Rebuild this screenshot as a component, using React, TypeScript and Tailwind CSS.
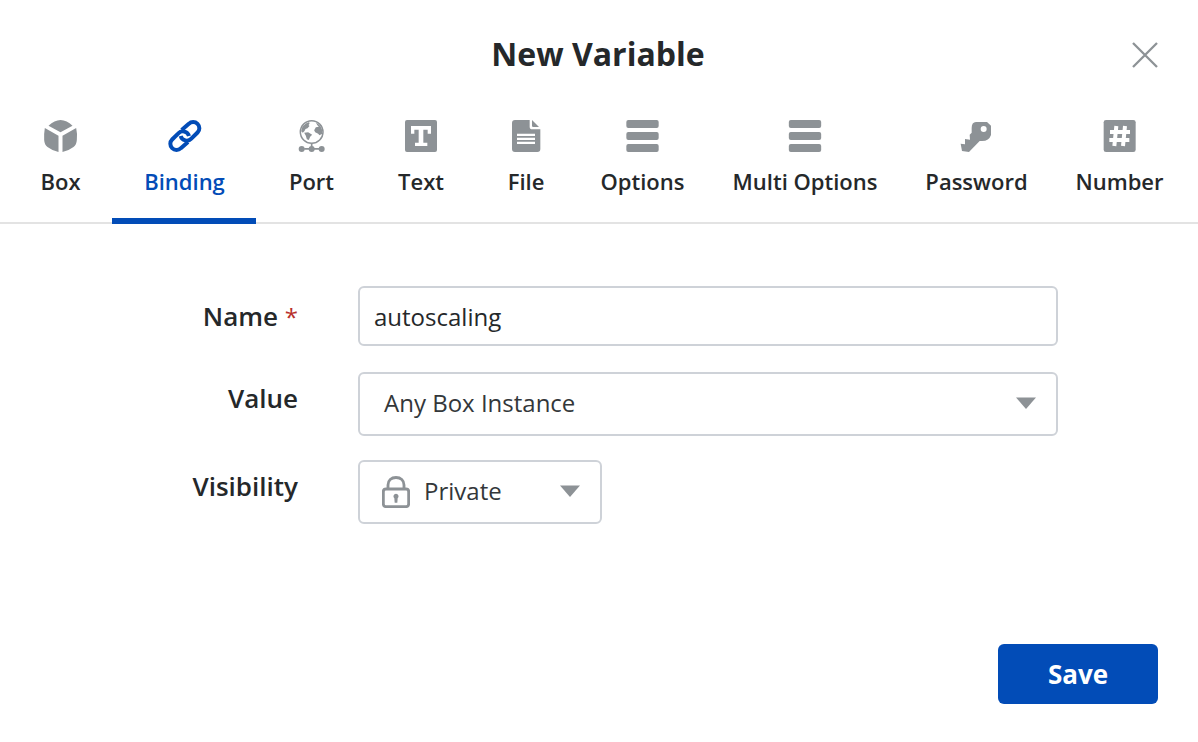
import { useState, type ReactNode } from 'react';

function Glyph({ shift, children }: { shift: number; children: ReactNode }) {
  return (
    <svg className="h-8 w-9 overflow-visible" viewBox="0 0 108 96" fill="currentColor">
      <g transform={`translate(${-shift} -60)`}>{children}</g>
    </svg>
  );
}

const BoxIcon = () => (
  <Glyph shift={128.5}>
    <path d="M145 77Q163 61 181 60Q200 61 217 77L181 97ZM134 84L175 107V156Q158 153 142 141Q133 135 132 120Q131 101 134 84ZM228 84L187 107V156Q204 153 220 141Q229 135 230 120Q232 101 228 84Z" />
  </Glyph>
);

const LinkIcon = () => (
  <Glyph shift={500}>
    <g fill="none" stroke="currentColor" strokeWidth="12">
      <path d="M544 90L565.400 71.400A18.500 18.500 0 0 1 591.600 97.600L573 116A19 19 0 0 1 541 108" />
      <path d="M563 126L541.600 144.600A18.500 18.500 0 0 1 515.400 118.400L534 100A19 19 0 0 1 566 108" />
    </g>
  </Glyph>
);

const PortIcon = () => (
  <Glyph shift={161.5}>
    <circle cx="214.500" cy="96" r="34" fill="none" stroke="currentColor" strokeWidth="4.500" />
    <path d="M183 94Q184 74 207 66L208 71L205 75L208 78L202 85L196 87L193 93L188 98ZM192 98L204 97L216 104L210 110L206 120L200 118L197 107ZM227 67Q243 76 246 91L246 101L238 106L234 101L225 97L222 91L227 82L236 80L231 75Z" />
    <path d="M212 130H217V144H237V149H192V144H212Z" />
    <circle cx="184.500" cy="147" r="9" />
    <circle cx="214.500" cy="147" r="9" />
    <circle cx="244.500" cy="147" r="9" />
  </Glyph>
);

const TextIcon = () => (
  <Glyph shift={489}>
    <path fillRule="evenodd" d="M501 60H585Q591 60 591 66V150Q591 156 585 156H501Q495 156 495 150V66Q495 60 501 60ZM513 78V101H523V89H536V128H525V138H562V128H550V89H563V101H573V78Z" />
  </Glyph>
);

const FileIcon = () => (
  <Glyph shift={84}>
    <path fillRule="evenodd" d="M105 60H149V80Q149 88 157 88H181V147Q181 156 172 156H105Q96 156 96 147V69Q96 60 105 60ZM111 101.500V108H165V101.500ZM111 113.500V120H165V113.500ZM111 125.500V132H165V125.500Z" />
    <path d="M156 60L177 81H160Q156 81 156 77Z" />
  </Glyph>
);

const BarsIcon = ({ shift }: { shift: number }) => (
  <Glyph shift={shift}>
    <rect x="439.500" y="60" width="97" height="24" rx="6" />
    <rect x="439.500" y="96" width="97" height="24" rx="6" />
    <rect x="439.500" y="132" width="97" height="24" rx="6" />
  </Glyph>
);

const KeyIcon = () => (
  <Glyph shift={57}>
    <path fillRule="evenodd" d="M108 66H141L153 77V105Q147 123 126 123H119L87 156L66 153L62 131L75 133V117L90 119L89 104L95 98V84Q95 66 108 66ZM131 78A9 9 0 1 0 131 96A9 9 0 1 0 131 78Z" />
  </Glyph>
);

const NumberIcon = () => (
  <Glyph shift={486}>
    <path d="M498 60H580Q587 60 587 67V149Q587 156 580 156H498Q491 156 491 149V67Q491 60 498 60Z" />
    <path d="M510 96H570M508 120H568M529 78L523 138M555 78L549 138" fill="none" stroke="#fff" strokeWidth="12" />
  </Glyph>
);

const LockIcon = () => (
  <svg className="h-8 w-7 text-[#8d9296]" viewBox="0 0 84 96" fill="none" stroke="currentColor">
    <rect x="4" y="39" width="76" height="53" rx="8" strokeWidth="8.500" />
    <path d="M18 38V27C18 13 28 4.500 42 4.500S66 13 66 27V38" strokeWidth="8.500" />
    <path d="M42 53A8 8 0 0 1 47 67L46 80H38L37 67A8 8 0 0 1 42 53Z" fill="currentColor" stroke="none" />
  </svg>
);

const Caret = () => (
  <svg className="h-3 w-5 text-[#8d9296]" viewBox="0 0 20 12" fill="currentColor">
    <path d="M0 0.500H20L10 12Z" />
  </svg>
);

const tabs = [
  { name: 'Box', width: 'w-[104px] pl-px', icon: <BoxIcon /> },
  { name: 'Binding', width: 'w-36 pl-px', icon: <LinkIcon /> },
  { name: 'Port', width: 'w-[111px]', icon: <PortIcon /> },
  { name: 'Text', width: 'w-[108px]', icon: <TextIcon /> },
  { name: 'File', width: 'w-[102px]', icon: <FileIcon /> },
  { name: 'Options', width: 'w-[131px]', icon: <BarsIcon shift={435.5} /> },
  { name: 'Multi Options', width: 'w-[194px]', icon: <BarsIcon shift={434} /> },
  { name: 'Password', width: 'w-[149px]', icon: <KeyIcon /> },
  { name: 'Number', width: 'w-[137px]', icon: <NumberIcon /> },
];

export default function App() {
  const [active, setActive] = useState('Binding');
  const [name, setName] = useState('autoscaling');

  return (
    <main className="flex h-[742px] w-[1198px] flex-col overflow-hidden bg-white font-['Open_Sans','Noto_Sans',sans-serif] text-[#25282a]">
      <header className="grid h-[104px] grid-cols-[1fr_auto_1fr] items-center pt-[6px]">
        <h1 className="col-start-2 pr-0.5 pb-0.5 text-[32px] font-bold leading-10">New Variable</h1>
        <button aria-label="Close" className="mr-10 justify-self-end text-[#8d9296]">
          <svg className="size-[26px]" viewBox="0 0 26 26" fill="none" stroke="currentColor" strokeWidth="2.300">
            <path d="M1 1L25 25M25 1L1 25" />
          </svg>
        </button>
      </header>

      <nav className="flex h-[120px] border-b-2 border-[#e3e3e3] pl-2">
        {tabs.map((tab) => {
          const on = tab.name === active;
          return (
            <button
              key={tab.name}
              onClick={() => setActive(tab.name)}
              className={`${tab.width} -mb-0.5 flex h-[120px] shrink-0 flex-col items-center whitespace-nowrap border-b-[6px] pt-4 ${on ? 'border-[#024cb7] text-[#024cb7]' : 'border-transparent'}`}
            >
              <span className={`flex h-8 items-center ${on ? '' : 'text-[#8d9296]'}`}>{tab.icon}</span>
              <span className="mt-[13px] text-[22px] font-semibold leading-8">{tab.name}</span>
            </button>
          );
        })}
      </nav>

      <form className="grid grid-cols-[298px_700px] gap-x-[60px] pt-[62px]" onSubmit={(e) => e.preventDefault()}>
        <label htmlFor="name" className="pt-[12px] text-right text-[26px] font-semibold leading-9">
          Name <span className="text-2xl leading-none font-normal text-[#b8302b]">*</span>
        </label>
        <input
          id="name"
          value={name}
          onChange={(e) => setName(e.target.value)}
          className="mb-[26px] h-[60px] rounded-md border-2 border-[#ced2d8] px-[14px] text-2xl text-[#25282a] outline-none"
        />
        <span className="pt-2 text-right text-[26px] font-semibold leading-9">Value</span>
        <button type="button" className="mb-6 flex h-16 items-center justify-between rounded-md border-2 border-[#ced2d8] pr-5 pb-0.5 pl-6 text-2xl text-[#33373a]">
          Any Box Instance
          <Caret />
        </button>
        <span className="pt-2 text-right text-[26px] font-semibold leading-9">Visibility</span>
        <button type="button" className="flex h-16 w-[244px] items-center rounded-md border-2 border-[#ced2d8] pr-5 pl-[22px] text-2xl text-[#33373a]">
          <LockIcon />
          <span className="mr-auto ml-[14px] pb-0.5">Private</span>
          <span className="flex pb-0.5"><Caret /></span>
        </button>
      </form>

      <footer className="mt-auto flex justify-end pr-10 pb-[38px]">
        <button className="h-[60px] w-40 rounded-md bg-[#024cb7] text-[26px] font-bold text-white">Save</button>
      </footer>
    </main>
  );
}
